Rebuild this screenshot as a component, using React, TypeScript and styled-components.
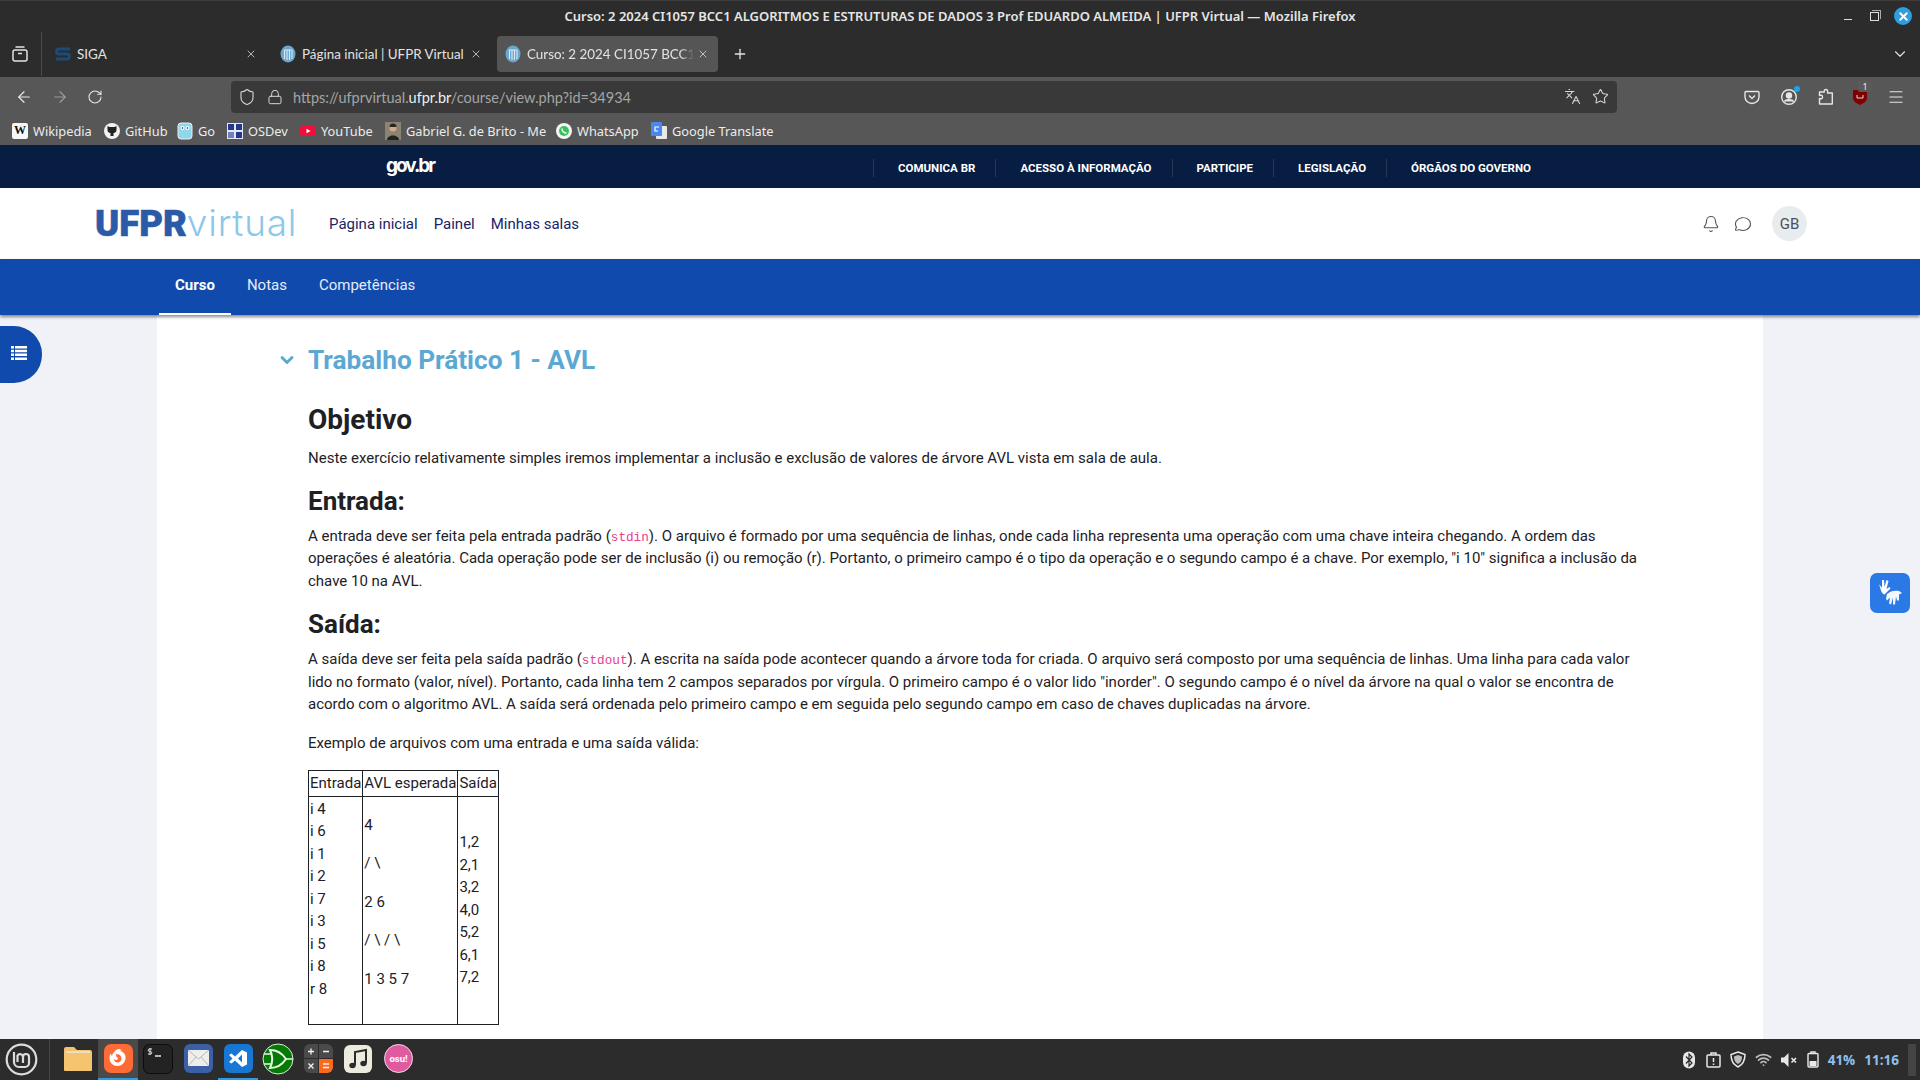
import React from "react";
import styled, { createGlobalStyle } from "styled-components";
import {
  ArrowLeft,
  ArrowRight,
  Bell,
  ChevronDown,
  Languages,
  Lock,
  Menu,
  MessageCircle,
  Plus,
  RotateCw,
  Shield,
  Star,
  Wifi,
  X,
} from "lucide-react";

const GlobalStyle = createGlobalStyle`
  html, body {
    margin: 0;
    padding: 0;
    overflow: hidden;
    font-family: Roboto, "Liberation Sans", sans-serif;
  }
  * { box-sizing: border-box; }
`;

const Screen = styled.div`
  position: relative;
  width: 1920px;
  height: 1080px;
  display: flex;
  flex-direction: column;
  overflow: hidden;
  background: #f0f2f7;
`;

const TitleBar = styled.div`
  height: 32px;
  flex: none;
  display: flex;
  align-items: center;
  justify-content: center;
  position: relative;
  padding-bottom: 2px;
  background: #2c2c2c;
  border-top: 1px solid #3c3c3c;
  color: #e6e6e6;
  font: 600 13px "Noto Sans", sans-serif;
`;

const WindowButtons = styled.div`
  position: absolute;
  right: 8px;
  top: 6px;
  display: flex;
  align-items: center;
  color: #ddd;
`;

const MinimizeIcon = styled.span`
  width: 8px;
  height: 1px;
  margin-top: 6px;
  margin-right: 18px;
  background: #ddd;
`;

const RestoreIcon = styled.span`
  position: relative;
  width: 9px;
  height: 9px;
  margin-right: 15px;
  border: 1px solid #ddd;
  &::after {
    content: "";
    position: absolute;
    left: 1px;
    top: -3px;
    width: 8px;
    height: 8px;
    border-top: 1px solid #aaa;
    border-right: 1px solid #aaa;
  }
`;

const CloseCircle = styled.span`
  width: 18px;
  height: 18px;
  border-radius: 50%;
  background: #2d9ee0;
  color: #fff;
  display: flex;
  align-items: center;
  justify-content: center;
`;

const TabBar = styled.div`
  height: 45px;
  flex: none;
  display: flex;
  align-items: center;
  padding-bottom: 1px;
  background: #2c2c2c;
  color: #e2e2e2;
  font: 400 13.4px Lato, "Noto Sans", sans-serif;
`;

const ViewButton = styled.div`
  width: 42px;
  height: 44px;
  padding-left: 12px;
  display: flex;
  align-items: center;
  border-right: 1px solid #4a4a4a;
`;

const Tabs = styled.div`
  display: flex;
  align-items: center;
  gap: 6px;
  margin-left: 5px;
`;

const Tab = styled.div<{ $w: number; $active?: boolean }>`
  width: ${(p) => p.$w}px;
  height: 36px;
  display: flex;
  align-items: center;
  gap: 6px;
  padding: 0 9px 0 8px;
  border-radius: 4px;
  background: ${(p) => (p.$active ? "#555555" : "transparent")};
`;

const TabLabel = styled.span<{ $fade?: boolean }>`
  flex: 1;
  min-width: 0;
  margin-right: -3px;
  overflow: hidden;
  white-space: nowrap;
  ${(p) => p.$fade && "mask-image: linear-gradient(to right, #000 calc(100% - 14px), transparent);"}
`;

const NewTab = styled.div`
  margin-left: 14px;
  display: flex;
`;

const TabsChevron = styled.div`
  margin-left: auto;
  margin-right: 11px;
  display: flex;
`;

const Toolbar = styled.div`
  height: 39px;
  flex: none;
  display: flex;
  align-items: center;
  padding-left: 15px;
  background: #575757;
  color: #e6e6e6;
`;

const NavButtons = styled.div`
  display: flex;
  align-items: center;
  gap: 18px;
  width: 216px;
`;

const UrlBar = styled.div`
  width: 1386px;
  height: 32px;
  display: flex;
  align-items: center;
  padding: 0 8px 0 7px;
  border-radius: 4px;
  background: #393939;
  color: #d6d6d6;
`;

const UrlText = styled.span`
  margin: 1px 0 0 10px;
  color: #a5a5a5;
  font: 400 14.5px Lato, "Noto Sans", sans-serif;
  flex: 1;
  b {
    font-weight: 400;
    color: #f0f0f0;
  }
`;

const UrlActions = styled.div`
  display: flex;
  align-items: center;
  gap: 11px;
`;

const ToolIcons = styled.div`
  display: flex;
  align-items: center;
  gap: 20px;
  margin-left: 127px;
`;

const ExtBadgeWrap = styled.div`
  position: relative;
  display: flex;
`;

const ExtBadge = styled.span`
  position: absolute;
  top: -8px;
  left: 5px;
  width: 14px;
  height: 11px;
  border-radius: 2px;
  background: #5a5a5a;
  color: #eee;
  font: 400 9px/11px "Noto Sans", sans-serif;
  text-align: center;
`;

const BookmarksBar = styled.div`
  height: 29px;
  flex: none;
  display: flex;
  align-items: center;
  padding-left: 12px;
  background: #575757;
  color: #ececec;
  font: 400 12.8px "Noto Sans", sans-serif;
`;

const Bookmark = styled.div<{ $w: number }>`
  width: ${(p) => p.$w}px;
  display: flex;
  align-items: center;
  gap: 5px;
  white-space: nowrap;
`;

const Favicon = styled.span<{ $bg: string; $fg?: string; $round?: boolean }>`
  width: 16px;
  height: 16px;
  flex: none;
  display: flex;
  align-items: center;
  justify-content: center;
  background: ${(p) => p.$bg};
  color: ${(p) => p.$fg || "#fff"};
  border-radius: ${(p) => (p.$round ? "50%" : "2px")};
  font: 700 12px "Liberation Serif", serif;
`;

const GovBar = styled.div`
  height: 43px;
  flex: none;
  display: flex;
  align-items: center;
  padding-left: 386px;
  background: #071d41;
  color: #fff;
`;

const GovLogo = styled.span`
  width: 49px;
  font: 700 19px Inter, sans-serif;
  letter-spacing: -2px;
  margin-top: -3px;
`;

const GovLinks = styled.nav`
  display: flex;
  margin: 3px 0 0 438px;
`;

const GovLink = styled.span`
  padding: 0 20px 0 24px;
  border-left: 1px solid #26395a;
  font: 700 11.5px/18px Roboto, sans-serif;
  white-space: nowrap;
`;

const Header = styled.header`
  height: 71px;
  flex: none;
  display: flex;
  align-items: center;
  padding: 0 113px 0 95px;
  background: #fff;
`;

const Logo = styled.div`
  width: 234px;
  display: flex;
  align-items: baseline;
  font-size: 36.5px;
  line-height: 1;
  b {
    font-weight: 900;
    color: #2b5ba8;
    -webkit-text-stroke: 0.6px #2b5ba8;
  }
`;

const LogoThin = styled.span`
  font-family: Inter, Roboto, sans-serif;
  font-weight: 300;
  font-size: 37px;
  letter-spacing: 0.8px;
  color: #8cc8e8;
`;

const MainMenu = styled.nav`
  display: flex;
  gap: 16px;
  color: #1a2466;
  font-size: 15px;
`;

const HeaderRight = styled.div`
  margin-left: auto;
  display: flex;
  align-items: center;
  color: #555;
  gap: 14px;
`;

const Avatar = styled.span`
  width: 35px;
  height: 35px;
  margin-left: 6px;
  border-radius: 50%;
  display: flex;
  align-items: center;
  justify-content: center;
  background: #e9ecef;
  color: #495057;
  font-size: 15px;
`;

const CourseNav = styled.nav`
  height: 56px;
  flex: none;
  display: flex;
  padding-left: 159px;
  background: #114aad;
  color: #f2f5fb;
  font-size: 15px;
  box-shadow: 0 2px 3px rgba(0, 0, 0, 0.45);
  position: relative;
`;

const NavTab = styled.span<{ $active?: boolean }>`
  padding: 0 16px 2px;
  display: flex;
  align-items: center;
  font-weight: ${(p) => (p.$active ? 700 : 400)};
  color: ${(p) => (p.$active ? "#fff" : "#e6ecf6")};
  border-bottom: 2px solid ${(p) => (p.$active ? "#fff" : "transparent")};
`;

const Page = styled.main`
  flex: 1;
  min-height: 0;
  margin: 0 157px;
  padding: 27px 0 0 151px;
  background: #fff;
  color: #1d2125;
  font-size: 15px;
  line-height: 22.5px;
  overflow: hidden;
`;

const SectionTitle = styled.h2`
  position: relative;
  margin: 0 0 25px;
  color: #5aa8d3;
  font-size: 26.2px;
  line-height: 36px;
  font-weight: 700;
`;

const TitleChevron = styled.span`
  position: absolute;
  left: -31px;
  top: 8px;
  display: flex;
`;

const Article = styled.article`
  width: 1340px;
`;

const H3 = styled.h3`
  margin: 0 0 10px;
  font-size: 28px;
  line-height: 34px;
  font-weight: 700;
`;

const H4 = styled.h4<{ $top: number }>`
  margin: ${(p) => p.$top}px 0 8px;
  font-size: 26px;
  line-height: 31px;
  font-weight: 700;
`;

const Para = styled.p`
  margin: 0 0 16px;
`;

const Code = styled.code`
  color: #e83e8c;
  font: 12.7px "Liberation Mono", monospace;
`;

const DataTable = styled.table`
  border-collapse: collapse;
  td {
    border: 1px solid #1d2125;
    padding: 1px;
    vertical-align: middle;
  }
  p {
    margin: 0 0 16px;
  }
`;

const SideToggle = styled.div`
  position: absolute;
  left: 0;
  top: 326px;
  width: 42px;
  height: 57px;
  display: flex;
  align-items: center;
  padding: 0 0 4px 11px;
  background: #114aad;
  border-radius: 0 28px 28px 0;
`;

const LibrasButton = styled.div`
  position: absolute;
  left: 1870px;
  top: 573px;
  width: 40px;
  height: 40px;
  display: flex;
  align-items: center;
  justify-content: center;
  background: #2a79e6;
  border-radius: 7px;
`;

const Taskbar = styled.footer`
  height: 41px;
  flex: none;
  position: relative;
  display: flex;
  align-items: center;
  padding-left: 5px;
  background: #2c2c2c;
  color: #e6e6e6;
`;

const Launcher = styled.div`
  width: 45px;
  height: 41px;
  margin-right: 8px;
  display: flex;
  align-items: center;
  border-right: 1px solid #454545;
`;

const DockItem = styled.div<{ $active?: boolean; $running?: boolean }>`
  width: 40px;
  height: 41px;
  display: flex;
  align-items: center;
  justify-content: center;
  background: ${(p) => (p.$active ? "#4a4a4a" : "transparent")};
  border-bottom: 2px solid ${(p) => (p.$active || p.$running ? "#2f9be0" : "transparent")};
`;

const Tray = styled.div`
  margin-left: auto;
  display: flex;
  align-items: center;
  gap: 9px;
  color: #e8e8e8;
`;

const TrayText = styled.span`
  font: 700 13.5px "Open Sans", sans-serif;
  color: #8fc0ea;
`;

const TrayEnd = styled.span`
  width: 8px;
  height: 32px;
  margin-right: 4px;
  background: #444;
`;

const UfprIcon = () => (
  <svg width="16" height="18" viewBox="0 0 16 18" style={{ flex: "none" }}>
    <ellipse cx="8" cy="9" rx="7.500" ry="8.500" fill="#6ba6cf" />
    <path d="M4 5h8M4.500 5v9M7 5v10M9.500 5v10M12 5v9" stroke="#dbe9f2" strokeWidth="1.100" fill="none" />
  </svg>
);

const SigaIcon = () => (
  <svg width="16" height="16" viewBox="0 0 16 16" style={{ flex: "none" }}>
    <path d="M15 3H4a2 2 0 0 0 0 5h8a2 2 0 0 1 0 5H1" stroke="#1c4b78" strokeWidth="3" fill="none" />
  </svg>
);

const FirefoxView = () => (
  <svg width="16" height="18" viewBox="0 0 16 18" fill="none" stroke="#e2e2e2" strokeWidth="1.500">
    <rect x="1" y="5" width="14" height="11" rx="2" />
    <path d="M3.500 2h9M6 8.500h4" />
  </svg>
);

const Pocket = () => (
  <svg width="16" height="16" viewBox="0 0 16 16" fill="none" stroke="#e6e6e6" strokeWidth="1.400">
    <path d="M2 2.500h12a1 1 0 0 1 1 1V8a7 6.500 0 0 1-14 0V3.500a1 1 0 0 1 1-1z" />
    <path d="M5 6.500l3 3 3-3" />
  </svg>
);

const Account = () => (
  <ExtBadgeWrap>
    <svg width="18" height="18" viewBox="0 0 18 18" fill="none" stroke="#e6e6e6" strokeWidth="1.400">
      <circle cx="9" cy="9" r="7.300" />
      <circle cx="9" cy="7.500" r="2.500" fill="#e6e6e6" />
      <path d="M4.500 13.500c1-2.500 8-2.500 9 0" fill="#e6e6e6" />
    </svg>
    <svg width="6" height="6" viewBox="0 0 6 6" style={{ position: "absolute", top: -2, right: -2 }}>
      <circle cx="3" cy="3" r="3" fill="#17a5f0" />
    </svg>
  </ExtBadgeWrap>
);

const PuzzleIcon = () => (
  <svg width="15" height="17" viewBox="0 0 15 17" fill="none" stroke="#e6e6e6" strokeWidth="1.400" strokeLinejoin="round">
    <path d="M8 1.500c-1.500 0-2 1-1.700 2.500H1.500v3.500c1.800-.6 3-.2 3 1.500s-1.200 2.200-3 1.500V16h12.800V5H9.500C10 3 9.500 1.500 8 1.500z" />
  </svg>
);

const UBlock = () => (
  <ExtBadgeWrap>
    <svg width="14" height="16" viewBox="0 0 14 16">
      <path d="M0 1h14v8c0 3-3 5-7 7-4-2-7-4-7-7z" fill="#800000" />
      <path d="M4 6v3h6V6" stroke="#ddd" fill="none" />
    </svg>
    <ExtBadge>1</ExtBadge>
  </ExtBadgeWrap>
);

const GitHubFav = () => (
  <Favicon $bg="#f2f2f2" $fg="#222" $round>
    <svg width="12" height="12" viewBox="0 0 12 12">
      <path d="M1.500 1l2 1h5l2-1v4c0 2-1.500 3-3 3v3h-3V8c-1.500 0-3-1-3-3z" fill="#222" />
    </svg>
  </Favicon>
);

const GoFav = () => (
  <svg width="16" height="18" viewBox="0 0 16 18" style={{ flex: "none" }}>
    <rect x="1" y="1" width="14" height="16" rx="3" fill="#8fd8ec" stroke="#eee" />
    <circle cx="5.500" cy="6" r="2" fill="#fff" />
    <circle cx="10.500" cy="6" r="2" fill="#fff" />
    <circle cx="5.500" cy="6" r="0.800" fill="#123" />
    <circle cx="10.500" cy="6" r="0.800" fill="#123" />
  </svg>
);

const OsdevFav = () => (
  <svg width="16" height="16" viewBox="0 0 16 16" style={{ flex: "none" }}>
    <rect width="16" height="16" fill="#e4e8f4" />
    <rect x="1" y="1" width="6" height="6" fill="#25368e" />
    <rect x="9" y="1" width="6" height="6" fill="#25368e" />
    <rect x="1" y="9" width="6" height="6" fill="#7180c0" />
    <rect x="9" y="9" width="6" height="6" fill="#25368e" />
  </svg>
);

const GabrielFav = () => (
  <svg width="16" height="18" viewBox="0 0 16 18" style={{ flex: "none" }}>
    <rect width="16" height="18" fill="#8d8373" />
    <circle cx="8" cy="6" r="3.500" fill="#d2ab8c" />
    <path d="M4.500 5a3.500 3.500 0 0 1 7 0z" fill="#2b2622" />
    <path d="M2 18c0-6 12-6 12 0z" fill="#26231f" />
  </svg>
);

const TranslateFav = () => (
  <svg width="16" height="18" viewBox="0 0 16 18" style={{ flex: "none" }}>
    <rect x="5" y="4" width="11" height="13" rx="1" fill="#e8e8e8" />
    <rect width="11" height="14" rx="1" fill="#4a88ee" />
    <path d="M8 5H4v4h3" stroke="#fff" fill="none" strokeWidth="1.200" />
  </svg>
);

const WhatsFav = () => (
  <Favicon $bg="#f4f4f4" $round>
    <svg width="12" height="12" viewBox="0 0 12 12">
      <circle cx="6" cy="6" r="5" fill="#3ac25a" />
      <path d="M4 3.500c0 2.500 2 4.500 4.500 4.500" stroke="#fff" strokeWidth="1.500" fill="none" />
    </svg>
  </Favicon>
);

const YoutubeFav = () => (
  <svg width="16" height="16" viewBox="0 0 16 16" style={{ flex: "none" }}>
    <rect x="0" y="3" width="16" height="10" rx="2.500" fill="#f00f3c" />
    <path d="M6.500 5.800v4.400L10.500 8z" fill="#fff" />
  </svg>
);

const ListIcon = () => (
  <svg width="16" height="14" viewBox="0 0 16 14" fill="#fff">
    <path d="M0 0h3v2.500H0zM4 0h12v2.500H4zM0 3.800h3v2.500H0zM4 3.800h12v2.500H4zM0 7.600h3v2.500H0zM4 7.600h12v2.500H4zM0 11.400h3v2.500H0zM4 11.400h12v2.500H4z" />
  </svg>
);

const DockFolder = () => (
  <svg width="30" height="26" viewBox="0 0 30 26">
    <path d="M1 3a2 2 0 0 1 2-2h8l3 3h13a2 2 0 0 1 2 2v17a2 2 0 0 1-2 2H3a2 2 0 0 1-2-2z" fill="#f4c26c" />
    <rect x="3" y="5" width="24" height="3" fill="#e8e0cc" />
    <rect x="1" y="7" width="28" height="18" rx="1.500" fill="#f6c46e" />
  </svg>
);

const DockFirefox = () => (
  <svg width="29" height="29" viewBox="0 0 29 29">
    <rect width="29" height="29" rx="7" fill="#ff6b35" />
    <path d="M14 5c2 0 3 .5 4 1.500C17 6.300 16 6.500 15.500 7c4 .5 6.500 3.500 6 7.500-.5 4.500-4 7.500-8 7.500-4.500 0-8-3.500-8-8 0-2 .5-3.500 1.500-4.500 0 1 .5 2 1 2.500C8.500 9 11 6.500 14 5z" fill="#fff" />
    <path d="M12 10.500c3-1 5.500 1 5.500 4s-2.500 4.500-4.500 4c-2-.3-3-2-3-3.500 1 1 2.500 1.200 3.500.5 1-.7.500-2-1-2.500-.3-1-.8-2-.5-2.500z" fill="#ff6b35" />
  </svg>
);

const DockTerminal = () => (
  <svg width="30" height="30" viewBox="0 0 30 30">
    <rect x="0.500" y="0.500" width="29" height="29" rx="6" fill="#232323" stroke="#0c0c0c" />
    <path d="M12 12h6" stroke="#e8e8e8" strokeWidth="1.500" />
    <path d="M9 5H6.500a1.200 1.200 0 0 0 0 2.500h1a1.200 1.200 0 0 1 0 2.500H5M7 4v7" stroke="#e8e8e8" fill="none" />
  </svg>
);

const DockMail = () => (
  <svg width="29" height="29" viewBox="0 0 29 29">
    <rect width="29" height="29" rx="6" fill="#3d5fa8" />
    <rect x="4" y="6" width="21" height="16" rx="1" fill="#eeeeea" />
    <path d="M4 6l10.500 9L25 6M4 22l8-9M25 22l-8-9" stroke="#b9b9b2" fill="none" />
  </svg>
);

const DockCode = () => (
  <svg width="29" height="29" viewBox="0 0 29 29">
    <rect width="29" height="29" rx="6" fill="#1877d2" />
    <path d="M18 6l5 2.500v12L18 23l-7-6.500-3.500 3L5 18l3.500-3.500L5 11l2.500-1.500 3.500 3zM18 10.500l-4 4 4 4z" fill="#fff" fillRule="evenodd" />
  </svg>
);

const DockLogic = () => (
  <svg width="32" height="32" viewBox="0 0 32 32">
    <circle cx="16" cy="16" r="15" fill="#047a04" stroke="#d8f0d8" strokeWidth="1" />
    <path d="M8 7c6 0 12 3 16 9-4 6-10 9-16 9 3-6 3-12 0-18z" fill="none" stroke="#e8f6e8" strokeWidth="2" />
    <path d="M2 11h8M2 21h8M24 16h7" stroke="#e8f6e8" strokeWidth="1.500" />
  </svg>
);

const DockCalc = () => (
  <svg width="29" height="29" viewBox="0 0 29 29">
    <rect width="29" height="29" rx="6" fill="#4a4a4a" />
    <path d="M15 15h14v8a6 6 0 0 1-6 6h-8z" fill="#fb6a1c" />
    <path d="M14.500 0v29M0 14.500h29" stroke="#2c2c2c" />
    <path d="M4 7.500h6M7 4.500v6M19 7.500h6M4.500 19.500l5 5M9.500 19.500l-5 5M19 20h6M19 23.500h6" stroke="#f4f4f4" strokeWidth="1.300" />
  </svg>
);

const DockMusic = () => (
  <svg width="28" height="28" viewBox="0 0 28 28">
    <rect width="28" height="28" rx="6" fill="#ecebdd" />
    <path d="M11 20V7l11-2v13" fill="none" stroke="#2b2b2b" strokeWidth="2" />
    <ellipse cx="8.500" cy="20.500" rx="3.200" ry="2.800" fill="#2b2b2b" />
    <ellipse cx="19.500" cy="18.500" rx="3.200" ry="2.800" fill="#2b2b2b" />
  </svg>
);

const DockOsu = () => (
  <svg width="29" height="29" viewBox="0 0 29 29">
    <circle cx="14.500" cy="14.500" r="14" fill="#e05a9f" stroke="#f0dce8" />
    <text x="14.500" y="18" textAnchor="middle" fill="#fff" fontSize="9.500" fontWeight="700" fontFamily="Roboto">osu!</text>
  </svg>
);

const MintLogo = () => (
  <svg width="33" height="33" viewBox="0 0 33 33" fill="none" stroke="#dcdcdc" strokeWidth="2.200">
    <circle cx="16.500" cy="16.500" r="14.800" />
    <path d="M9 9v10a5 5 0 0 0 5 5h6a4 4 0 0 0 4-4v-6a3 3 0 0 0-6 0v6M18 14a3 3 0 0 0-5.500-1.500V19" />
  </svg>
);

const TrayBluetooth = () => (
  <svg width="16" height="18" viewBox="0 0 16 18">
    <rect x="2" y="0.500" width="12" height="17" rx="6" fill="#e8e8e8" />
    <path d="M5 5.500l6 6.500-3 3V3l3 3-6 6.500" fill="none" stroke="#2c2c2c" strokeWidth="1.200" />
  </svg>
);

const TrayClipboard = () => (
  <svg width="15" height="16" viewBox="0 0 15 16" fill="none" stroke="#e8e8e8" strokeWidth="1.500">
    <rect x="1" y="3" width="13" height="12" rx="1" />
    <path d="M5 3V1h5v2M7.500 6v4M7.500 11.500v1.500" />
  </svg>
);

const TrayShield = () => (
  <svg width="16" height="17" viewBox="0 0 16 17" fill="none" stroke="#e8e8e8" strokeWidth="1.500">
    <path d="M8 1l7 2.500c0 6-2 10-7 12.500C3 13.500 1 9.500 1 3.500z" />
    <path d="M8 4l4 1.500c0 3.500-1 6-4 7.500-3-1.500-4-4-4-7.500z" fill="#bdbdbd" stroke="none" />
  </svg>
);

const TrayMute = () => (
  <svg width="17" height="14" viewBox="0 0 17 14">
    <path d="M0 4.500h3L7.500 0v14L3 9.500H0z" fill="#e8e8e8" />
    <path d="M10.500 5l4.500 4.500M15 5l-4.500 4.500" stroke="#e8e8e8" strokeWidth="1.600" />
  </svg>
);

const TrayBattery = () => (
  <svg width="12" height="17" viewBox="0 0 12 17" fill="none" stroke="#e8e8e8" strokeWidth="1.400">
    <path d="M4 2V1h4v1" />
    <rect x="1" y="2.500" width="10" height="13.500" rx="1" />
    <rect x="2.500" y="10" width="7" height="5" fill="#e8e8e8" stroke="none" />
  </svg>
);

const LibrasHands = () => (
  <svg width="30" height="30" viewBox="0 0 30 30" fill="#fff">
    <path d="M4 6l3 4 0-8 2 0 .5 7 2-7 2 1-2 8 3-2 1 1.500-4 4-2 2c-3-1-4-5-5.500-11z" />
    <path d="M12 16c3-3 8-4 12-3l3 2-3 1.500 0 6-2 0-1-4-1 8-2 0 0-7-2 7-2-1 1-6-3 3-1-2z" opacity="0.95" />
  </svg>
);

const tabs = [
  { w: 219, label: "SIGA", icon: <SigaIcon /> },
  { w: 219, label: "Página inicial | UFPR Virtual", icon: <UfprIcon /> },
  { w: 221, label: "Curso: 2 2024 CI1057 BCC1 ALGORITMOS", icon: <UfprIcon />, active: true },
];

const bookmarks = [
  { w: 92, label: "Wikipedia", icon: <Favicon $bg="#f7f7f7" $fg="#111">W</Favicon> },
  { w: 73, label: "GitHub", icon: <GitHubFav /> },
  { w: 50, label: "Go", icon: <GoFav /> },
  { w: 73, label: "OSDev", icon: <OsdevFav /> },
  { w: 85, label: "YouTube", icon: <YoutubeFav /> },
  { w: 171, label: "Gabriel G. de Brito - Me", icon: <GabrielFav /> },
  { w: 95, label: "WhatsApp", icon: <WhatsFav /> },
  { w: 120, label: "Google Translate", icon: <TranslateFav /> },
];

const govLinks = ["COMUNICA BR", "ACESSO À INFORMAÇÃO", "PARTICIPE", "LEGISLAÇÃO", "ÓRGÃOS DO GOVERNO"];

const inputs = ["i 4", "i 6", "i 1", "i 2", "i 7", "i 3", "i 5", "i 8", "r 8"];
const tree = ["4", "/ \\", "2 6", "/ \\ / \\", "1 3 5 7"];
const outputs = ["1,2", "2,1", "3,2", "4,0", "5,2", "6,1", "7,2"];

export default function App() {
  return (
    <Screen>
      <GlobalStyle />
      <TitleBar>
        Curso: 2 2024 CI1057 BCC1 ALGORITMOS E ESTRUTURAS DE DADOS 3 Prof EDUARDO ALMEIDA | UFPR Virtual — Mozilla Firefox
        <WindowButtons>
          <MinimizeIcon />
          <RestoreIcon />
          <CloseCircle>
            <X size={13} strokeWidth={3.5} />
          </CloseCircle>
        </WindowButtons>
      </TitleBar>

      <TabBar>
        <ViewButton>
          <FirefoxView />
        </ViewButton>
        <Tabs>
          {tabs.map((t) => (
            <Tab key={t.label} $w={t.w} $active={t.active}>
              {t.icon}
              <TabLabel $fade={t.active}>{t.label}</TabLabel>
              <X size={12} strokeWidth={1.5} style={{ flex: "none" }} />
            </Tab>
          ))}
        </Tabs>
        <NewTab>
          <Plus size={16} />
        </NewTab>
        <TabsChevron>
          <ChevronDown size={18} strokeWidth={1.5} />
        </TabsChevron>
      </TabBar>

      <Toolbar>
        <NavButtons>
          <ArrowLeft size={18} strokeWidth={1.6} />
          <ArrowRight size={18} strokeWidth={1.6} color="#9a9a9a" />
          <RotateCw size={16} strokeWidth={1.6} />
        </NavButtons>
        <UrlBar>
          <Shield size={18} strokeWidth={1.5} />
          <Lock size={16} strokeWidth={1.5} style={{ marginLeft: 11 }} />
          <UrlText>
            https://ufprvirtual.<b>ufpr.br</b>/course/view.php?id=34934
          </UrlText>
          <UrlActions>
            <Languages size={17} strokeWidth={1.5} />
            <Star size={17} strokeWidth={1.5} />
          </UrlActions>
        </UrlBar>
        <ToolIcons>
          <Pocket />
          <Account />
          <PuzzleIcon />
          <UBlock />
          <Menu size={18} strokeWidth={1.5} />
        </ToolIcons>
      </Toolbar>

      <BookmarksBar>
        {bookmarks.map((b) => (
          <Bookmark key={b.label} $w={b.w}>
            {b.icon}
            {b.label}
          </Bookmark>
        ))}
      </BookmarksBar>

      <GovBar>
        <GovLogo>gov.br</GovLogo>
        <GovLinks>
          {govLinks.map((l) => (
            <GovLink key={l}>{l}</GovLink>
          ))}
        </GovLinks>
      </GovBar>

      <Header>
        <Logo>
          <b>UFPR</b>
          <LogoThin>virtual</LogoThin>
        </Logo>
        <MainMenu>
          <span>Página inicial</span>
          <span>Painel</span>
          <span>Minhas salas</span>
        </MainMenu>
        <HeaderRight>
          <Bell size={18} strokeWidth={1.5} />
          <MessageCircle size={18} strokeWidth={1.5} style={{ transform: "scaleY(0.85)" }} />
          <Avatar>GB</Avatar>
        </HeaderRight>
      </Header>

      <CourseNav>
        <NavTab $active>Curso</NavTab>
        <NavTab>Notas</NavTab>
        <NavTab>Competências</NavTab>
      </CourseNav>

      <Page>
        <SectionTitle>
          <TitleChevron>
            <ChevronDown size={20} strokeWidth={3.5} color="#5aa8d3" />
          </TitleChevron>
          Trabalho Prático 1 - AVL
        </SectionTitle>
        <Article>
          <H3>Objetivo</H3>
          <Para>Neste exercício relativamente simples iremos implementar a inclusão e exclusão de valores de árvore AVL vista em sala de aula.</Para>
          <H4 $top={0}>Entrada:</H4>
          <Para>
            A entrada deve ser feita pela entrada padrão (<Code>stdin</Code>). O arquivo é formado por uma sequência de linhas, onde cada linha representa uma operação com uma chave inteira chegando. A ordem das operações é aleatória. Cada operação pode ser de inclusão (i) ou remoção (r). Portanto, o primeiro campo é o tipo da operação e o segundo campo é a chave. Por exemplo, "i 10" significa a inclusão da chave 10 na AVL.
          </Para>
          <H4 $top={17}>Saída:</H4>
          <Para>
            A saída deve ser feita pela saída padrão (<Code>stdout</Code>). A escrita na saída pode acontecer quando a árvore toda for criada. O arquivo será composto por uma sequência de linhas. Uma linha para cada valor lido no formato (valor, nível). Portanto, cada linha tem 2 campos separados por vírgula. O primeiro campo é o valor lido "inorder". O segundo campo é o nível da árvore na qual o valor se encontra de acordo com o algoritmo AVL. A saída será ordenada pelo primeiro campo e em seguida pelo segundo campo em caso de chaves duplicadas na árvore.
          </Para>
          <Para>Exemplo de arquivos com uma entrada e uma saída válida:</Para>
          <DataTable>
            <tbody>
              <tr>
                <td>Entrada</td>
                <td>AVL esperada</td>
                <td>Saída</td>
              </tr>
              <tr>
                <td>
                  {inputs.map((v) => (
                    <React.Fragment key={v}>
                      {v}
                      <br />
                    </React.Fragment>
                  ))}
                  <br />
                </td>
                <td>
                  {tree.map((v) => (
                    <p key={v}>{v}</p>
                  ))}
                </td>
                <td>
                  {outputs.map((v) => (
                    <React.Fragment key={v}>
                      {v}
                      <br />
                    </React.Fragment>
                  ))}
                </td>
              </tr>
            </tbody>
          </DataTable>
        </Article>
      </Page>

      <SideToggle>
        <ListIcon />
      </SideToggle>
      <LibrasButton>
        <LibrasHands />
      </LibrasButton>

      <Taskbar>
        <Launcher>
          <MintLogo />
        </Launcher>
        <DockItem>
          <DockFolder />
        </DockItem>
        <DockItem $active>
          <DockFirefox />
        </DockItem>
        <DockItem>
          <DockTerminal />
        </DockItem>
        <DockItem>
          <DockMail />
        </DockItem>
        <DockItem $running>
          <DockCode />
        </DockItem>
        <DockItem>
          <DockLogic />
        </DockItem>
        <DockItem>
          <DockCalc />
        </DockItem>
        <DockItem>
          <DockMusic />
        </DockItem>
        <DockItem>
          <DockOsu />
        </DockItem>
        <Tray>
          <TrayBluetooth />
          <TrayClipboard />
          <TrayShield />
          <Wifi size={17} color="#bbb" strokeWidth={2.5} />
          <TrayMute />
          <TrayBattery />
          <TrayText>41%</TrayText>
          <TrayText>11:16</TrayText>
          <TrayEnd />
        </Tray>
      </Taskbar>
    </Screen>
  );
}
